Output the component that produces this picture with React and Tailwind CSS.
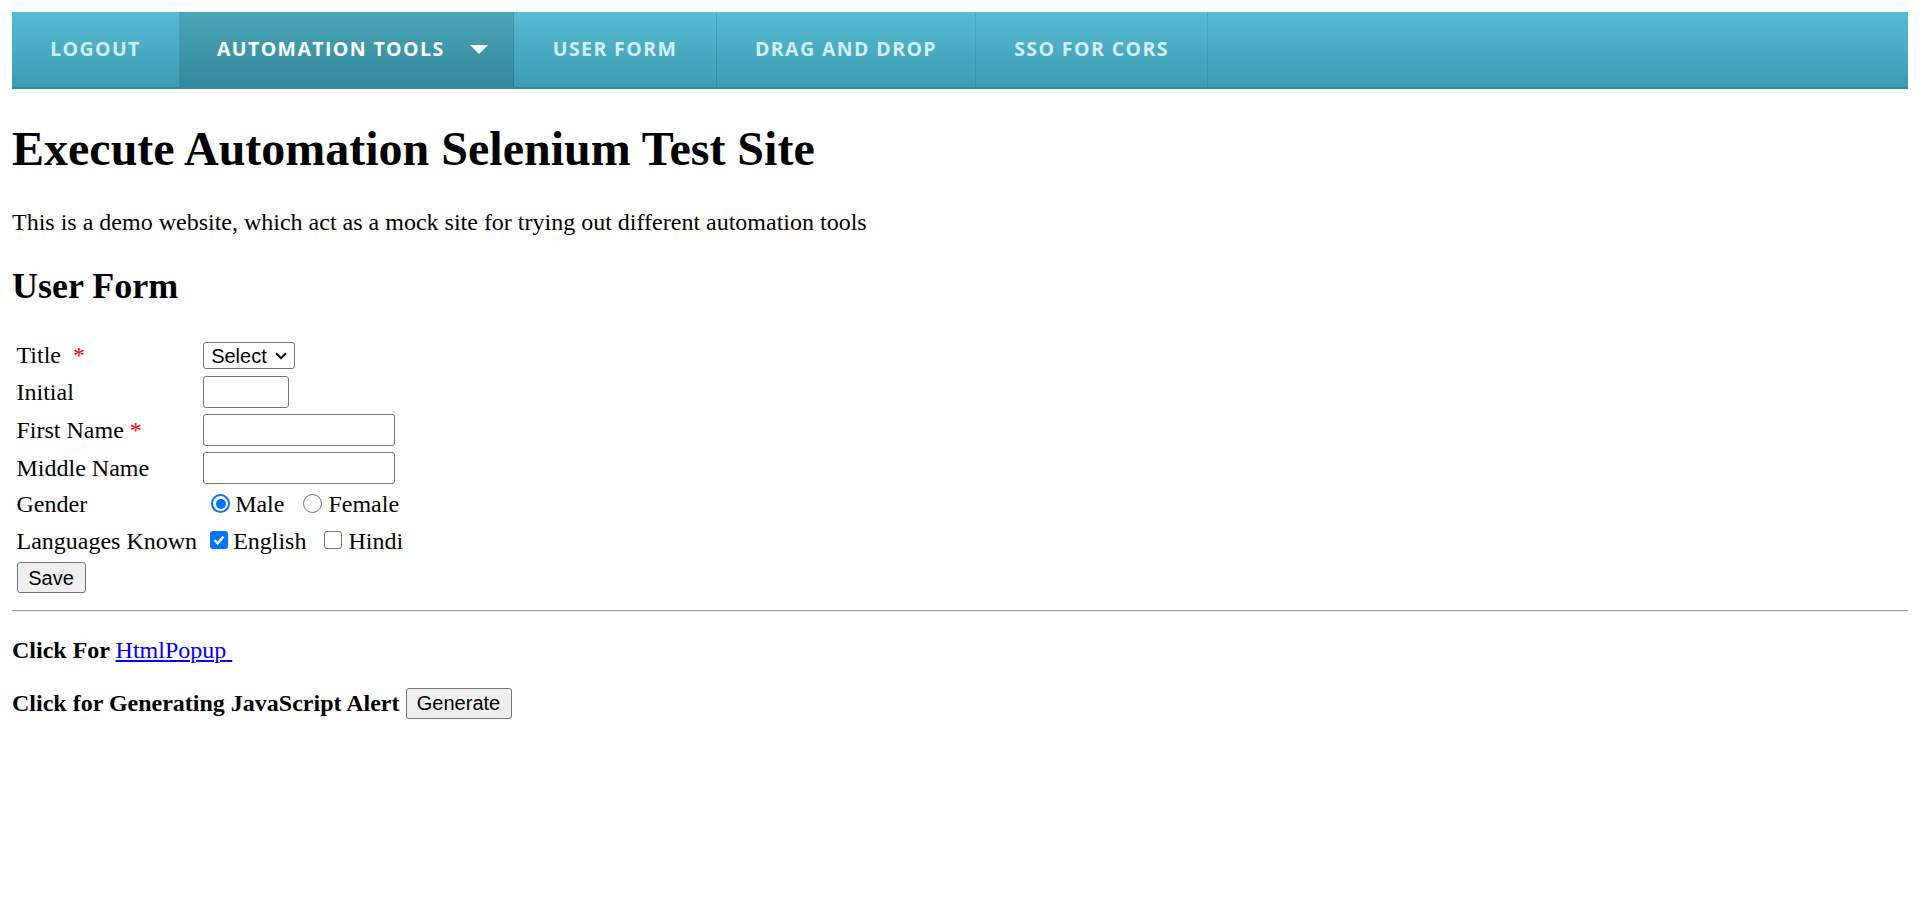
import React from 'react';

const navItems = [
  { label: 'Logout', width: 'w-[168px]' },
  { label: 'Automation Tools', width: 'w-[334px]', active: true, dropdown: true },
  { label: 'User Form', width: 'w-[203px]' },
  { label: 'Drag and Drop', width: 'w-[259px]' },
  { label: 'SSO for CORS', width: 'w-[232px]' },
];

const NavBar = () => (
  <nav className="mx-[12px] mt-[12px] h-[77px] flex bg-linear-to-b from-[#55bcd3] to-[#3d9cb2] border-b-2 border-[#338a9c]">
    {navItems.map((item) => (
      <a
        key={item.label}
        href="#"
        className={`${item.width} h-full pb-[2px] flex items-center border-r border-black/10 uppercase font-bold text-[19.5px] tracking-[1.4px] font-['Open_Sans',sans-serif] ${
          item.active
            ? 'justify-start pl-[37px] bg-linear-to-b from-[#4ba6b9] to-[#338799] text-white'
            : 'justify-center text-[#d3eff3]'
        }`}
      >
        <span>{item.label}</span>
        {item.dropdown && (
          <svg width="18" height="9" viewBox="0 0 18 9" className="ml-[25px] mt-[1px]">
            <polygon points="0,0 18,0 9,9" fill="#ffffff" />
          </svg>
        )}
      </a>
    ))}
  </nav>
);

const Star = () => <span className="text-[#ff0000]">*</span>;

const TextInput = ({ width }) => (
  <input
    type="text"
    className={`${width} h-[32px] block border-[1.5px] border-[#767676] rounded-[3px] bg-white px-[3px] text-[20px] font-['Liberation_Sans',sans-serif]`}
  />
);

const Radio = ({ checked, className }) =>
  checked ? (
    <span className={`inline-flex shrink-0 w-[19px] h-[19px] rounded-full border-[2px] border-[#0075ff] items-center justify-center ${className}`}>
      <span className="w-[10px] h-[10px] rounded-full bg-[#0075ff]" />
    </span>
  ) : (
    <span className={`inline-block shrink-0 w-[19px] h-[19px] rounded-full border-[1.5px] border-[#767676] bg-white ${className}`} />
  );

const Checkbox = ({ checked, className }) =>
  checked ? (
    <span className={`inline-flex shrink-0 w-[18px] h-[18px] rounded-[3px] bg-[#0075ff] items-center justify-center ${className}`}>
      <svg width="14" height="14" viewBox="0 0 14 14">
        <path d="M2.5 7.2 L5.6 10.2 L11.5 3.6" fill="none" stroke="#ffffff" strokeWidth="2.4" />
      </svg>
    </span>
  ) : (
    <span className={`inline-block shrink-0 w-[18px] h-[18px] rounded-[3px] border-[1.5px] border-[#767676] bg-white ${className}`} />
  );

const Button = ({ children, width }) => (
  <button
    type="button"
    className={`${width} h-[31px] bg-[#efefef] border-[1.5px] border-[#767676] rounded-[3px] text-[20px] font-normal text-black font-['Liberation_Sans',sans-serif] leading-none`}
  >
    {children}
  </button>
);

const UserForm = () => (
  <form>
    <table className="border-separate border-spacing-[3px] text-[24px]">
      <tbody>
        <tr>
          <td className="p-[1.5px]">
            <div className="h-[28.5px] flex items-center whitespace-pre">
              Title{'\u00a0 '}
              <Star />
            </div>
          </td>
          <td className="p-[1.5px]">
            <div className="h-[28.5px] flex items-center">
              <div className="relative">
                <select className="block appearance-none w-[92px] h-[27px] border-[1.5px] border-[#767676] rounded-[3px] bg-white pl-[7px] text-[20px] leading-[24px] text-black font-['Liberation_Sans',sans-serif]">
                  <option>Select</option>
                  <option>Mr.</option>
                  <option>Ms.</option>
                </select>
                <svg width="12" height="8" viewBox="0 0 12 8" className="absolute left-[72px] top-[10px] pointer-events-none">
                  <path d="M1 1.2 L6 6.2 L11 1.2" fill="none" stroke="#000000" strokeWidth="2" />
                </svg>
              </div>
            </div>
          </td>
        </tr>
        <tr>
          <td className="p-[1.5px]">Initial</td>
          <td className="p-[1.5px]">
            <TextInput width="w-[86px]" />
          </td>
        </tr>
        <tr>
          <td className="p-[1.5px]">
            First Name <Star />
          </td>
          <td className="p-[1.5px]">
            <TextInput width="w-[192px]" />
          </td>
        </tr>
        <tr>
          <td className="p-[1.5px]">Middle Name</td>
          <td className="p-[1.5px]">
            <TextInput width="w-[192px]" />
          </td>
        </tr>
        <tr>
          <td className="p-[1.5px]">
            <div className="h-[27px] flex items-center">
              <span className="pt-[2px]">Gender</span>
            </div>
          </td>
          <td className="p-[1.5px]">
            <div className="h-[27px] flex items-center">
              <Radio checked className="ml-[8px] mr-[5px]" />
              <span className="pt-[2px]">Male</span>
              <Radio className="ml-[19px] mr-[6px]" />
              <span className="pt-[2px]">Female</span>
            </div>
          </td>
        </tr>
        <tr>
          <td className="p-[1.5px]">
            <div className="h-[33px] flex items-center">
              <span className="pt-[3px]">Languages Known</span>
            </div>
          </td>
          <td className="p-[1.5px]">
            <div className="h-[33px] flex items-center">
              <Checkbox checked className="ml-[7px] mr-[5px]" />
              <span className="pt-[3px]">English</span>
              <Checkbox className="ml-[18px] mr-[6px]" />
              <span className="pt-[3px]">Hindi</span>
            </div>
          </td>
        </tr>
        <tr>
          <td className="p-[1.5px]">
            <div className="h-[31px] flex items-center">
              <Button width="w-[69px]">Save</Button>
            </div>
          </td>
          <td className="p-[1.5px]" />
        </tr>
      </tbody>
    </table>
  </form>
);

export default function App() {
  return (
    <div className="min-h-[905px] bg-white text-black leading-[normal] font-['Liberation_Serif',serif]">
      <NavBar />
      <div className="px-[12px]">
        <h1 className="mt-[32px] text-[48px] font-bold leading-[55px]">Execute Automation Selenium Test Site</h1>
        <p className="mt-[32px] text-[24px] leading-[28px]">
          This is a demo website, which act as a mock site for trying out different automation tools
        </p>
        <h2 className="mt-[30px] mb-[30px] text-[36px] font-bold leading-[41px]">User Form</h2>
        <UserForm />
        <hr className="mt-[12px] border-t-[1.5px] border-[#9a9a9a] border-b border-b-[#eeeeee]" />
        <p className="mt-[24px] text-[24px] leading-[28px] font-bold">
          Click For{' '}
          <a href="#" className="font-normal text-[#0000ee] underline">
            HtmlPopup{'\u00a0'}
          </a>
        </p>
        <p className="mt-[24px] text-[24px] leading-[28px] font-bold">
          Click for Generating JavaScript Alert <Button width="w-[106px]">Generate</Button>
        </p>
      </div>
    </div>
  );
}
